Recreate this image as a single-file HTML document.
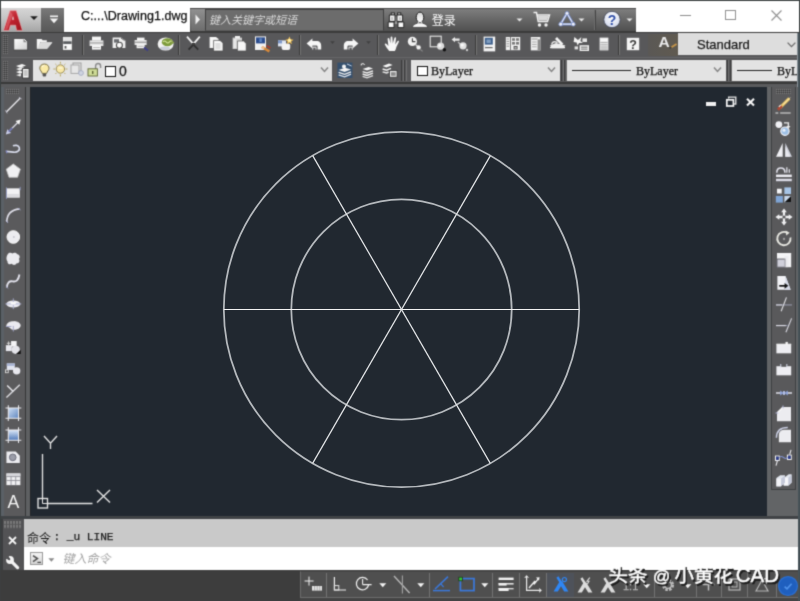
<!DOCTYPE html><html><head><meta charset="utf-8"><style>
*{margin:0;padding:0;box-sizing:border-box}
html,body{width:800px;height:601px;overflow:hidden;background:#555557;font-family:"Liberation Sans",sans-serif}
#r{position:absolute;left:0;top:0;width:800px;height:601px;overflow:hidden;background:#555557}
.a{position:absolute}
svg{position:absolute;overflow:visible}
#c{position:absolute;left:-4px;top:-4px;width:808px;height:609px;padding:0;filter:url(#sb);background:#3f4548}
#c>*{margin-left:4px;margin-top:4px}
</style></head><body><div id="r"><svg width="0" height="0" style="left:0;top:0"><filter id="sb" x="0" y="0" width="100%" height="100%" color-interpolation-filters="sRGB"><feConvolveMatrix order="3" kernelMatrix="0.02768 0.11101 0.02768 0.11101 0.44521 0.11101 0.02768 0.11101 0.02768" edgeMode="duplicate" preserveAlpha="true"/></filter></svg><div id="c"><div class="a" style="left:0px;top:0px;width:800px;height:1px;background:#3a4040;"></div>
<div class="a" style="left:0px;top:0px;width:1px;height:601px;background:#3a4040;"></div>
<div class="a" style="left:1px;top:1px;width:799px;height:31px;background:#ffffff;"></div>
<div class="a" style="left:1px;top:8px;width:40px;height:24px;background:linear-gradient(#d6d6d6,#c4c4c4 45%,#a4a4a4);"></div>
<div class="a" style="left:41px;top:8px;width:23px;height:24px;background:linear-gradient(#7a7a7a,#666 50%,#585858);"></div>
<svg style="left:3px;top:10px" width="20" height="21" viewBox="0 0 20 21" ><defs><linearGradient id="ag" x1="0" y1="0" x2="1" y2="1"><stop offset="0" stop-color="#e0606a"/><stop offset=".45" stop-color="#c02430"/><stop offset="1" stop-color="#9c141c"/></linearGradient></defs><path d="M7 0.6 L13.2 0.6 L19.4 20.4 L13.6 20.4 L12.6 15.2 L7.4 15.2 L6 20.4 L0.6 20.4 Z M9.2 9.6 L10.8 9.6 L10 6.6 Z" fill="url(#ag)" fill-rule="evenodd" stroke="#eeb0b4" stroke-opacity=".55" stroke-width="1"/><path d="M7.6 1.4 L2 19.6 L4.4 19.6 L9.6 5 Z" fill="#ec8088" opacity=".45"/></svg>
<svg style="left:30px;top:15.6px" width="8" height="4.4" viewBox="0 0 8 4.4" ><path d="M0.2 0.3 L7.8 0.3 L4 4.1 Z" fill="#1c1c1c"/></svg>
<svg style="left:49px;top:15px" width="10" height="9" viewBox="0 0 10 9" ><rect x="1" y="0.5" width="8" height="1.6" fill="#f4f4f4"/><path d="M0.8 3.6 L9.2 3.6 L5 8.3 Z" fill="#f4f4f4"/></svg>
<div class="a" style="left:81px;top:10px;font-size:12.5px;line-height:12.5px;color:#101010;font-family:'Liberation Sans',sans-serif;white-space:nowrap;-webkit-text-stroke:0.25px #101010;letter-spacing:0.05px">C:...\Drawing1.dwg</div>
<div class="a" style="left:190px;top:8px;width:446px;height:24px;background:linear-gradient(#7e7e7e,#666 50%,#505050);border-top:1px solid #484848;border-bottom:1.4px solid #3a3a3a"></div>
<div class="a" style="left:191px;top:9px;width:14px;height:22px;background:linear-gradient(#909090,#6c6c6c);"></div>
<svg style="left:195px;top:14px" width="6" height="11" viewBox="0 0 6 11" ><path d="M0.5 0.5 L5 5.5 L0.5 10.5 Z" fill="#f0f0f0"/></svg>
<div class="a" style="left:205px;top:9px;width:178.5px;height:21.5px;background:#6c6c6c;border:1px solid #404040;border-bottom-color:#5a5a5a"></div>
<svg style="left:0px;top:0px" width="800" height="40" viewBox="0 0 800 40" ><text x="209" y="23.5" font-family="'Liberation Sans','Noto Sans CJK SC',sans-serif" font-size="11" font-style="italic" fill="#d8d8d8">键入关键字或短语</text></svg>
<svg style="left:387px;top:12px" width="18" height="17" viewBox="0 0 18 17" ><g stroke="#1c1c1c" stroke-width=".9"><rect x="4.2" y="0.9" width="3.2" height="2.2" fill="#d8d8d8"/><rect x="10.6" y="0.9" width="3.2" height="2.2" fill="#d8d8d8"/><rect x="7.6" y="4.4" width="2.8" height="7.6" fill="#9a9a9a" stroke="none"/><path d="M2.4 3 H8 V9.4 H2.4Z" fill="#f4f4f4"/><path d="M10 3 H15.6 V9.4 H10Z" fill="#f4f4f4"/><path d="M1.2 10 H7 V15.6 H1.2Z" fill="#fafafa"/><path d="M11 10 H16.8 V15.6 H11Z" fill="#fafafa"/></g><rect x="4" y="5" width="2" height="3" fill="#c4c4c4"/><rect x="12" y="5" width="2" height="3" fill="#c4c4c4"/></svg>
<svg style="left:411px;top:11px" width="18" height="18" viewBox="0 0 18 18" ><defs><linearGradient id="ug" x1="0" y1="0" x2="0" y2="1"><stop offset="0" stop-color="#d8d8d8"/><stop offset="1" stop-color="#ffffff"/></linearGradient></defs><path d="M1.4 16.4 C1.6 13.6 4 13.2 6.6 12 L11.4 12 C14 13.2 16.4 13.6 16.6 16.4 Z" fill="#f8f8f8" stroke="#2a2a2a" stroke-width=".7"/><ellipse cx="9" cy="6.4" rx="3.8" ry="5.3" fill="url(#ug)" stroke="#1c1c1c" stroke-width="1"/><path d="M7 10.8 C8 12 10 12 11 10.8 L11.4 12.4 L6.6 12.4Z" fill="#e8e8e8"/></svg>
<svg style="left:0px;top:0px" width="800" height="40" viewBox="0 0 800 40" ><text x="431.8" y="24.6" font-family="'Liberation Sans','Noto Sans CJK SC',sans-serif" font-size="12" fill="#fafafa">登录</text></svg>
<svg style="left:516px;top:18px" width="7" height="4" viewBox="0 0 7 4" ><path d="M0.5 0.5 L6.5 0.5 L3.5 3.6 Z" fill="#e8e8e8"/></svg>
<svg style="left:533px;top:11px" width="18" height="18" viewBox="0 0 18 18" ><path d="M0.5 1.5 L3.5 1.5 L5.2 10.5 L14.5 10.5 L16.5 4 L4.4 4" fill="none" stroke="#f0f0f0" stroke-width="1.5"/><path d="M5 5 L15.5 5 L14 9.5 L5.6 9.5Z" fill="#d9d9d9"/><circle cx="6.5" cy="14" r="1.7" fill="#f0f0f0"/><circle cx="13" cy="14" r="1.7" fill="#f0f0f0"/></svg>
<svg style="left:558px;top:11px" width="18" height="17" viewBox="0 0 18 17" ><path d="M9 2.2 L15.4 13.2 L2.6 13.2 Z" fill="none" stroke="#6f86c8" stroke-width="2.6" stroke-linejoin="round"/><path d="M9 2.2 L15.4 13.2 L2.6 13.2 Z" fill="none" stroke="#e8ecf8" stroke-width="1.2" stroke-linejoin="round"/><circle cx="9" cy="2.4" r="1.9" fill="#f0f2fa" stroke="#6f86c8" stroke-width=".7"/><circle cx="15.3" cy="13.2" r="1.9" fill="#f0f2fa" stroke="#6f86c8" stroke-width=".7"/><circle cx="2.7" cy="13.2" r="1.9" fill="#f0f2fa" stroke="#6f86c8" stroke-width=".7"/></svg>
<svg style="left:578px;top:18px" width="7" height="4" viewBox="0 0 7 4" ><path d="M0.5 0.5 L6.5 0.5 L3.5 3.6 Z" fill="#e8e8e8"/></svg>
<div class="a" style="left:594px;top:10px;width:1px;height:20px;background:#6e6e6e;"></div>
<div class="a" style="left:595px;top:10px;width:1px;height:20px;background:#444;"></div>
<svg style="left:603px;top:10px" width="18" height="19" viewBox="0 0 18 19" ><defs><radialGradient id="hg" cx=".5" cy=".35" r=".7"><stop offset="0" stop-color="#ffffff"/><stop offset="1" stop-color="#cfd6ea"/></radialGradient></defs><circle cx="9" cy="9.5" r="8.2" fill="url(#hg)" stroke="#3a3f52" stroke-width=".8"/><text x="9" y="14.6" text-anchor="middle" font-family="Liberation Sans" font-weight="bold" font-size="14" fill="#2f4ea8">?</text></svg>
<svg style="left:626px;top:18px" width="7" height="4" viewBox="0 0 7 4" ><path d="M0.5 0.5 L6.5 0.5 L3.5 3.6 Z" fill="#e8e8e8"/></svg>
<div class="a" style="left:680px;top:15px;width:11px;height:1px;background:#8c8c8c;"></div>
<div class="a" style="left:725px;top:10px;width:11px;height:10px;background:transparent;border:1px solid #909090"></div>
<svg style="left:771px;top:10px" width="11" height="11" viewBox="0 0 11 11" ><path d="M0.5 0.5 L10.5 10.5 M10.5 0.5 L0.5 10.5" stroke="#909090" stroke-width="1.1" fill="none"/></svg>
<div class="a" style="left:1px;top:32px;width:799px;height:26px;background:#58585a;border-top:1px solid #3b3b3b;border-bottom:1.6px solid #3e3e3e"></div>
<div class="a" style="left:1px;top:57.4px;width:799px;height:25px;background:#58585a;border-top:1px solid #666668"></div>
<div class="a" style="left:1px;top:82.3px;width:799px;height:1.8px;background:#393939;"></div>
<div class="a" style="left:1px;top:84.1px;width:799px;height:3px;background:#5a5b5d;"></div>
<svg style="left:3px;top:35px" width="6" height="19" viewBox="0 0 6 19" ><defs><pattern id="gp3_35" width="2" height="2" patternUnits="userSpaceOnUse"><rect width="1" height="1" fill="#747474"/><rect x="1" y="1" width="1" height="1" fill="#3c3c3c"/></pattern></defs><rect width="5" height="19" fill="url(#gp3_35)"/></svg>
<svg width="0" height="0" style="left:0;top:0"><defs><linearGradient id="wg" x1="0" y1="0" x2="1" y2="1"><stop offset="0" stop-color="#ffffff"/><stop offset="1" stop-color="#cfcfcf"/></linearGradient></defs></svg>
<svg style="left:13px;top:38px" width="16" height="13" viewBox="0 0 16 13" ><path d="M0.8 0.5 H10.5 L14.6 4.2 V12 H0.8Z" fill="url(#wg)" stroke="#3a3a3a" stroke-width=".7"/><path d="M10.5 0.5 V4.2 H14.6Z" fill="#8a8a8a"/><path d="M11.2 1.3 L13.6 3.6" stroke="#fff" stroke-width="1"/></svg>
<svg style="left:36px;top:38px" width="17" height="12" viewBox="0 0 17 12" ><path d="M0.8 1 H5.5 L6.8 2.2 H10.8 V4 H4.6 L1.6 10.2 H0.8Z" fill="#f4f4f4"/><path d="M4.8 4.6 H16 L11.2 10.6 H1.2Z" fill="#dadada" stroke="#fafafa" stroke-width=".6"/></svg>
<svg style="left:62px;top:36px" width="11" height="15" viewBox="0 0 11 15" ><rect x="0.6" y="0.6" width="9.6" height="13.6" fill="#f0f0f0" stroke="#444" stroke-width=".6"/><rect x="1.2" y="5.3" width="8.4" height="2.6" fill="#55575a"/><rect x="1.8" y="1.4" width="7.2" height="3.4" fill="#e2e2e2"/><rect x="1.8" y="8.8" width="7.2" height="4.6" fill="#fafafa"/><rect x="2.6" y="10" width="1.8" height="2.6" fill="#555"/></svg>
<div class="a" style="left:82px;top:35px;width:1px;height:20px;background:#3a3a3a;"></div>
<div class="a" style="left:83px;top:35px;width:1px;height:20px;background:#747474;"></div>
<svg style="left:89px;top:36px" width="15" height="14" viewBox="0 0 15 14" ><rect x="3" y="0.6" width="9" height="4" fill="#f6f6f6"/><path d="M0.6 4.4 H14.4 V10 H0.6Z" fill="#e8e8e8"/><rect x="0.6" y="6.4" width="13.8" height="1.1" fill="#9a9a9a"/><rect x="3" y="9.4" width="9" height="4.2" fill="#fafafa"/><rect x="4" y="11" width="7" height=".8" fill="#aaa"/></svg>
<svg style="left:112px;top:37px" width="14" height="12" viewBox="0 0 14 12" ><path d="M0.6 0.6 H9 L13.4 3.6 V11 H0.6Z" fill="#efefef"/><rect x="2" y="2.2" width="5" height="3.4" fill="#6a6c70"/><circle cx="7.4" cy="8.2" r="3" fill="#fafafa" stroke="#4c4c4c" stroke-width="1.1"/><path d="M9 1 L12.6 3.6" stroke="#666" stroke-width="1"/></svg>
<svg style="left:134px;top:37px" width="15" height="14" viewBox="0 0 15 14" ><rect x="3" y="0.6" width="7.5" height="3" fill="#f6f6f6"/><path d="M0.6 3 H12.6 V8 H0.6Z" fill="#e8e8e8"/><rect x="0.6" y="4.7" width="12" height="1" fill="#8a8a8a"/><rect x="2.6" y="7.4" width="8" height="3.8" fill="#fafafa"/><rect x="3.6" y="8.8" width="6" height=".8" fill="#999"/><path d="M10 10.5 L14 13.5" stroke="#3c3c8a" stroke-width="1.6"/></svg>
<svg style="left:157px;top:36px" width="18" height="16" viewBox="0 0 18 16" ><ellipse cx="8.6" cy="8" rx="8" ry="6.6" fill="#f2f2f2"/><ellipse cx="10.4" cy="6.2" rx="5.6" ry="4" fill="#7d9a3c"/><path d="M6 6 q1.6 -2 3.2 0 t3.2 0 t3 0" stroke="#d8e8a0" stroke-width="1.1" fill="none"/><ellipse cx="8" cy="12.2" rx="5" ry="1.6" fill="#c8ccd8"/><path d="M14.5 4.5 L17.5 6.5 L14.5 8.5Z" fill="#8aa04a"/></svg>
<div class="a" style="left:178px;top:35px;width:1px;height:20px;background:#3a3a3a;"></div>
<div class="a" style="left:179px;top:35px;width:1px;height:20px;background:#747474;"></div>
<svg style="left:186px;top:36px" width="15" height="15" viewBox="0 0 15 15" ><path d="M1 0.6 L7.4 8 L13.8 0.6" stroke="#f4f4f4" stroke-width="1.8" fill="none"/><path d="M7.4 8.6 L2.6 13.6 M7.4 8.6 L12.2 13.6" stroke="#2e2e2e" stroke-width="1.8" fill="none"/><rect x="5.8" y="7" width="3.2" height="1.6" fill="#333"/></svg>
<svg style="left:208px;top:36px" width="17" height="16" viewBox="0 0 17 16" ><path d="M1.6 1 H8 L10.6 3 V12 H1.6Z" fill="#f6f6f6"/><path d="M5.6 4.4 H12 L15 7 V15 H5.6Z" fill="#f8f8f8" stroke="#4a4a4a" stroke-width=".7"/><path d="M7.4 8 H12.6 M7.4 10 H12.6 M7.4 12 H12.6" stroke="#b0b0b0" stroke-width=".7"/></svg>
<svg style="left:231px;top:35px" width="17" height="17" viewBox="0 0 17 17" ><path d="M1.6 2.6 H11 V14 H1.6Z" fill="#cfcfcf"/><rect x="4" y="1" width="5" height="2.6" fill="#f0f0f0"/><path d="M6.4 6 H12.6 L15.2 8.4 V16 H6.4Z" fill="#f6f6f6" stroke="#4a4a4a" stroke-width=".7"/><rect x="2.4" y="4" width="3" height="9" fill="#e8e8e8"/></svg>
<svg style="left:254px;top:35px" width="18" height="18" viewBox="0 0 18 18" ><rect x="1" y="1.4" width="11" height="13.6" fill="#f2f2f2"/><rect x="2" y="2.4" width="9" height="6" fill="#2c4d8e"/><rect x="5.4" y="3.4" width="2.4" height="3.6" fill="#5f86c4"/><path d="M8 12 L15.4 16.4" stroke="#d98a3a" stroke-width="2.6"/><path d="M12.6 10.6 L16.4 13" stroke="#b03a2a" stroke-width="1.6"/><circle cx="9" cy="12.6" r="1.6" fill="#f0c090"/></svg>
<svg style="left:277px;top:36px" width="18" height="16" viewBox="0 0 18 16" ><rect x="1" y="4.4" width="8" height="6" fill="#dfe6f2"/><rect x="4.6" y="7.6" width="8.6" height="6.4" rx="2" fill="#f4f4f4"/><rect x="1" y="4.4" width="4" height="3" fill="#7d97c8"/><path d="M12.4 0.4 L13.6 3.2 L16.6 3.8 L14.2 5.4 L14.8 8.2 L12.4 6.6 L10 8.2 L10.6 5.4 L8.4 3.8 L11.2 3.2Z" fill="#f2c25a"/><circle cx="12.4" cy="4.4" r="1.6" fill="#fff2b0"/></svg>
<div class="a" style="left:299px;top:35px;width:1px;height:20px;background:#3a3a3a;"></div>
<div class="a" style="left:300px;top:35px;width:1px;height:20px;background:#747474;"></div>
<svg style="left:306px;top:38px" width="16" height="13" viewBox="0 0 16 13" ><path d="M0.6 5.4 L6.4 0.4 V3 H10.4 C13.8 3 15.2 5 15.2 8 V11.6 H11.6 V9 C11.6 7.8 11 7.6 10 7.6 H6.4 V10.4Z" fill="#f6f6f6"/><path d="M6.8 11.6 V9.2 H10 V11.6" fill="none" stroke="#e0e0e0" stroke-width="1"/></svg>
<svg style="left:343px;top:38px" width="16" height="13" viewBox="0 0 16 13" ><g transform="translate(16,0) scale(-1,1)"><path d="M0.6 5.4 L6.4 0.4 V3 H10.4 C13.8 3 15.2 5 15.2 8 V11.6 H11.6 V9 C11.6 7.8 11 7.6 10 7.6 H6.4 V10.4Z" fill="#f6f6f6"/><path d="M6.8 11.6 V9.2 H10 V11.6" fill="none" stroke="#e0e0e0" stroke-width="1"/></g></svg>
<svg style="left:330px;top:41.2px" width="5" height="3.2" viewBox="0 0 5 3.2" ><path d="M0.2 0.2 H4.8 L2.5 3Z" fill="#404040"/></svg>
<svg style="left:366px;top:41.2px" width="5" height="3.2" viewBox="0 0 5 3.2" ><path d="M0.2 0.2 H4.8 L2.5 3Z" fill="#404040"/></svg>
<div class="a" style="left:377px;top:35px;width:1px;height:20px;background:#3a3a3a;"></div>
<div class="a" style="left:378px;top:35px;width:1px;height:20px;background:#747474;"></div>
<svg style="left:384px;top:36px" width="17" height="16" viewBox="0 0 17 16" ><path d="M5.2 15 C3.4 12.6 1.8 10.6 0.8 8.4 C0.6 7.4 1.8 7 2.6 8 L4.4 10 L3.6 3 C3.6 1.8 5.2 1.8 5.4 3 L6.4 7.6 L6.6 1.4 C6.8 0.2 8.4 0.2 8.4 1.4 L8.8 7.6 L10.4 2 C10.8 0.9 12.2 1.2 12 2.4 L11.2 8.4 L13.6 5 C14.4 4.2 15.4 5 14.8 6 L12.4 11 C12 13 11.4 14 10.8 15Z" fill="#f8f8f8"/></svg>
<svg style="left:407px;top:36px" width="17" height="16" viewBox="0 0 17 16" ><circle cx="5.4" cy="5.4" r="4.6" fill="#f2f2f2"/><path d="M5.4 2.2 V5.6 H8.4" stroke="#444" stroke-width="1.1" fill="none"/><path d="M8.8 8.8 L11 11" stroke="#c8c8c8" stroke-width="1.6"/><circle cx="11.6" cy="11.4" r="2.2" fill="#f4f4f4"/><path d="M13.4 13.4 L15.6 15.4" stroke="#8a8a8a" stroke-width="1.2"/></svg>
<svg style="left:429px;top:35px" width="18" height="17" viewBox="0 0 18 17" ><rect x="1.2" y="1.2" width="11" height="10.6" fill="none" stroke="#e6e6e6" stroke-width="1.1"/><circle cx="11.6" cy="11.2" r="3.6" fill="#dcdcdc"/><circle cx="10.8" cy="10.4" r="1.6" fill="#f8f8f8"/><circle cx="15.4" cy="14.8" r="1.7" fill="#101010"/></svg>
<svg style="left:451px;top:36px" width="18" height="16" viewBox="0 0 18 16" ><path d="M0.6 3.6 L4 1 V2.6 H8.6 V4.8 H4 V6.2Z" fill="#e8e8e8"/><path d="M7 6 L9.6 8.4" stroke="#bbb" stroke-width="1.4"/><circle cx="12" cy="9.8" r="3.6" fill="#e0e0e0"/><circle cx="11.2" cy="9" r="1.6" fill="#fafafa"/><circle cx="16" cy="14" r="1.2" fill="#c8c8c8"/></svg>
<div class="a" style="left:475px;top:35px;width:1px;height:20px;background:#3a3a3a;"></div>
<div class="a" style="left:476px;top:35px;width:1px;height:20px;background:#747474;"></div>
<svg style="left:483px;top:36px" width="13" height="16" viewBox="0 0 13 16" ><rect x="0.6" y="0.6" width="11.6" height="14.8" fill="#f4f4f4"/><rect x="1.8" y="1.8" width="8" height="6.8" fill="#3d5f8c"/><rect x="3.4" y="3.4" width="4.4" height="3.6" fill="#7f9dc0"/><path d="M3 11.6 H9.6" stroke="#666" stroke-width="1.2"/><path d="M3 10.4 L1.8 11.6 L3 12.8" fill="#666"/></svg>
<svg style="left:505px;top:36px" width="16" height="15" viewBox="0 0 16 15" ><rect x="0.8" y="1" width="14.4" height="13.2" fill="#f2f2f2"/><rect x="5" y="1" width=".9" height="13.2" fill="#6a6a6a"/><path d="M1.6 3 H4.2 M1.6 5.4 H4.2 M1.6 7.8 H4.2 M1.6 10.2 H4.2" stroke="#8a8a8a" stroke-width=".9"/><rect x="7" y="2.2" width="3" height="2.6" fill="#7a7a7a"/><rect x="11" y="2.2" width="3" height="2.6" fill="#7a7a7a"/><rect x="7" y="6" width="3" height="2.6" fill="#7a7a7a"/><rect x="11" y="6" width="3" height="2.6" fill="#7a7a7a"/><rect x="8.6" y="10" width="4" height="3.4" fill="#555"/><rect x="9.6" y="11" width="2" height="1.6" fill="#bbb"/></svg>
<svg style="left:530px;top:36px" width="11" height="15" viewBox="0 0 11 15" ><rect x="0.8" y="1" width="9.6" height="13.4" fill="#f0f0f0"/><rect x="7.6" y="3.4" width="2.8" height="11" fill="#8a8a8a"/><rect x="1.6" y="2" width="6" height="2" fill="#c0c0c0"/><path d="M2 6 H6.6 M2 8.4 H6.6 M2 10.8 H6.6" stroke="#aaa" stroke-width="1"/></svg>
<svg style="left:549px;top:36px" width="18" height="15" viewBox="0 0 18 15" ><path d="M1 9.6 L7 7 L16.4 9.4 L14.4 12.2 H2.6Z" fill="#eeeeee"/><path d="M1 11.6 H16" stroke="#f6f6f6" stroke-width="1.2"/><path d="M7 2 L13.4 8.6" stroke="#f4f4f4" stroke-width="2.8"/><path d="M2.6 8.6 C3.4 5.4 6.4 5 8.4 7" stroke="#e0e0e0" stroke-width="1.5" fill="none"/></svg>
<svg style="left:573px;top:36px" width="18" height="16" viewBox="0 0 18 16" ><path d="M1.4 1 L5 4 L8.4 1 L7.4 5 L10 7 H6 L4.6 9.6 L3.6 6.6 L0.6 6Z" fill="#f4f4f4"/><rect x="9.4" y="2.4" width="4.6" height="3.6" fill="#e6e6e6"/><rect x="6.6" y="9.2" width="9.4" height="5.8" fill="#f2f2f2"/><rect x="8" y="10.6" width="6.6" height="1.1" fill="#777"/><rect x="8" y="12.6" width="6.6" height="1.1" fill="#777"/><rect x="1.6" y="10.4" width="3.4" height="3" fill="#e0e0e0"/></svg>
<svg style="left:599px;top:37px" width="10" height="14" viewBox="0 0 10 14" ><rect x="0.6" y="0.6" width="8.8" height="12.8" fill="#ececec"/><rect x="1.6" y="1.8" width="6.8" height="2.2" fill="#fafafa"/><path d="M1.4 5.6 H8.6 M1.4 7.8 H8.6 M1.4 10 H8.6 M1.4 12 H8.6" stroke="#9a9a9a" stroke-width=".8"/></svg>
<div class="a" style="left:618px;top:35px;width:1px;height:20px;background:#3a3a3a;"></div>
<div class="a" style="left:619px;top:35px;width:1px;height:20px;background:#747474;"></div>
<svg style="left:626px;top:37px" width="14" height="14" viewBox="0 0 14 14" ><rect x="0.8" y="0.8" width="12.4" height="12.4" fill="#f4f4f4"/><text x="7" y="11.6" text-anchor="middle" font-family="Liberation Sans" font-weight="bold" font-size="12.5" fill="#3a3a3a">?</text></svg>
<div class="a" style="left:648px;top:34px;width:30px;height:22px;background:linear-gradient(90deg,#5a5855,#605a50);"></div>
<svg style="left:657px;top:35px" width="22" height="16" viewBox="0 0 22 16" ><text x="1.4" y="12.4" font-family="Liberation Sans" font-weight="bold" font-size="15.5" fill="#ececec">A</text><path d="M14 12.4 L19.6 9" stroke="#c8964a" stroke-width="1.8"/><path d="M12.6 13.4 L14.4 12.2" stroke="#3a3a3a" stroke-width="1.4"/></svg>
<div class="a" style="left:678px;top:33.2px;width:122px;height:22.2px;background:#dddddd;"></div>
<div class="a" style="left:697px;top:38px;font-size:13px;line-height:13px;color:#1a1a1a;font-family:'Liberation Sans',sans-serif;white-space:nowrap;-webkit-text-stroke:0.25px #1a1a1a;">Standard</div>
<svg style="left:786.5px;top:42.4px" width="9" height="6" viewBox="0 0 9 6" ><path d="M0.6 0.6 L4.5 4.6 L8.4 0.6" stroke="#6a6a6a" stroke-width="1.3" fill="none"/></svg>
<svg style="left:3px;top:61px" width="6" height="19" viewBox="0 0 6 19" ><defs><pattern id="gp3_61" width="2" height="2" patternUnits="userSpaceOnUse"><rect width="1" height="1" fill="#747474"/><rect x="1" y="1" width="1" height="1" fill="#3c3c3c"/></pattern></defs><rect width="5" height="19" fill="url(#gp3_61)"/></svg>
<div class="a" style="left:33px;top:59.5px;width:299px;height:21.4px;background:#e3e3e3;"></div>
<div class="a" style="left:411px;top:59.5px;width:149px;height:21.4px;background:#e3e3e3;"></div>
<div class="a" style="left:567px;top:59.5px;width:159px;height:21.4px;background:#e3e3e3;"></div>
<div class="a" style="left:732px;top:59.5px;width:68px;height:21.4px;background:#e3e3e3;"></div>
<svg style="left:319.5px;top:67.3px" width="9" height="6" viewBox="0 0 9 6" ><path d="M1 0.6 L4.5 4.4 L8 0.6" stroke="#848484" stroke-width="1.5" fill="none"/></svg>
<svg style="left:547px;top:67.3px" width="9" height="6" viewBox="0 0 9 6" ><path d="M1 0.6 L4.5 4.4 L8 0.6" stroke="#848484" stroke-width="1.5" fill="none"/></svg>
<svg style="left:713px;top:67.3px" width="9" height="6" viewBox="0 0 9 6" ><path d="M1 0.6 L4.5 4.4 L8 0.6" stroke="#848484" stroke-width="1.5" fill="none"/></svg>
<svg style="left:14px;top:63px" width="16" height="16" viewBox="0 0 16 16" ><path d="M2 3 L8 1 L12 2.6 L6 4.8Z" fill="#f6f6f6"/><path d="M2 6 L8 4 L10 4.8 L6 7.8Z" fill="#eaeaea"/><path d="M2 9 L6 7.8 L8 8.6 V10 L6 10.8Z" fill="#f6f6f6"/><path d="M2 12 L7 10.8 V13 L6 13.6Z" fill="#eaeaea"/><rect x="8.4" y="5.6" width="6.6" height="9.4" fill="#f8f8f8" stroke="#333" stroke-width=".8"/><path d="M9.8 8 H13.6 M9.8 10 H13.6 M9.8 12 H13.6" stroke="#888" stroke-width=".9"/></svg>
<svg style="left:39px;top:62.8px" width="11" height="15" viewBox="0 0 11 15" ><path d="M5.4 1 C8.6 1 10 3.4 10 5.2 C10 7.4 8 8.4 7.6 10.4 H3.2 C2.8 8.4 0.8 7.4 0.8 5.2 C0.8 3.4 2.2 1 5.4 1Z" fill="#faeaa6" stroke="#5a5028" stroke-width=".8"/><rect x="3.6" y="10.6" width="3.6" height="2.8" fill="#555" rx=".8"/><path d="M3.2 4 C3.6 2.8 4.6 2.4 5.4 2.4" stroke="#fff" stroke-width=".9" fill="none"/></svg>
<svg style="left:53px;top:61px" width="15" height="16" viewBox="0 0 15 16" ><circle cx="7.4" cy="8" r="4.2" fill="#f8e8a8" stroke="#8a7a40" stroke-width=".8"/><path d="M7.4 0.8 V2.6 M7.4 13.4 V15.4 M0.4 8 H2.2 M12.6 8 H14.4 M2.4 3 L3.6 4.2 M12.4 3 L11.2 4.2 M2.4 13 L3.6 11.8 M12.4 13 L11.2 11.8" stroke="#b8a860" stroke-width="1"/><path d="M5.4 7 H9.4" stroke="#fff" stroke-width=".8"/></svg>
<svg style="left:70px;top:62px" width="15" height="15" viewBox="0 0 15 15" ><rect x="3" y="1" width="8" height="8.4" fill="none" stroke="#9c9c9c" stroke-width="1"/><rect x="1" y="3" width="8" height="8.4" fill="#e6e6e6" stroke="#a8a8a8" stroke-width="1"/><circle cx="11" cy="11" r="2.4" fill="#d0d4e0" stroke="#a0a8c0" stroke-width=".8"/></svg>
<svg style="left:87px;top:62px" width="15" height="15" viewBox="0 0 15 15" ><path d="M8.6 7 V4 C8.6 0.6 13.6 0.6 13.6 4 V6" fill="none" stroke="#8a8a8a" stroke-width="1.4"/><rect x="1" y="6.8" width="9.4" height="7.2" fill="#cfdc98" stroke="#5c6434" stroke-width=".9"/><rect x="5" y="9" width="1.4" height="3" fill="#5c6434"/></svg>
<div class="a" style="left:104.6px;top:65.6px;width:11px;height:11px;background:#ffffff;border:1px solid #111"></div>
<div class="a" style="left:119px;top:64.4px;font-size:14px;line-height:14px;color:#111;font-family:'Liberation Sans',sans-serif;white-space:nowrap;-webkit-text-stroke:0.25px #111;">0</div>
<svg style="left:337px;top:62px" width="16" height="17" viewBox="0 0 16 17" ><rect x="0.4" y="0.6" width="15" height="15.4" fill="#35506e"/><circle cx="7" cy="4.4" r="2" fill="#f4f4f4"/><path d="M1.6 8 L8 5.8 L14 7.4 L7.6 10Z" fill="#f4f4f4"/><path d="M1.6 10.4 L7.6 12.4 L14 9.8" stroke="#f4f4f4" stroke-width="1.3" fill="none"/><path d="M1.6 12.8 L7.6 14.8 L14 12.2" stroke="#e0e6ee" stroke-width="1.3" fill="none"/><path d="M10 2 L14.6 4" stroke="#c8d4e4" stroke-width="1"/></svg>
<svg style="left:359px;top:62px" width="16" height="17" viewBox="0 0 16 17" ><path d="M2 2.6 C3.4 1 5 1.4 5.6 3" stroke="#eee" stroke-width="1" fill="none"/><path d="M2 1.4 L1.6 3.4 L3.4 3Z" fill="#eee"/><path d="M3.6 7 L9.6 5 L14 6.4 L8 8.6Z" fill="#f6f6f6"/><path d="M3.6 9.6 L8 11 L14 8.8" stroke="#f2f2f2" stroke-width="1.4" fill="none"/><path d="M3.6 12 L8 13.4 L14 11.2" stroke="#f2f2f2" stroke-width="1.4" fill="none"/><path d="M3.6 14.4 L8 15.8 L14 13.6" stroke="#e0e0e0" stroke-width="1.4" fill="none"/></svg>
<svg style="left:381px;top:62px" width="17" height="17" viewBox="0 0 17 17" ><path d="M1.6 4 L8 1.6 L11.6 3 L5.4 5.4Z" fill="#f6f6f6"/><path d="M1.6 7 L5.6 8.2 L10 6.4" stroke="#f2f2f2" stroke-width="1.4" fill="none"/><path d="M1.6 9.8 L5.6 11 L7.6 10" stroke="#e8e8e8" stroke-width="1.4" fill="none"/><rect x="8.6" y="8.6" width="7.4" height="6.6" fill="#e8e8e8" stroke="#333" stroke-width=".7"/><rect x="10" y="10.2" width="4.6" height="3.6" fill="#8a8a8a"/></svg>
<div class="a" style="left:401px;top:59.5px;width:1px;height:21.4px;background:#3c3c3c;"></div>
<div class="a" style="left:402.5px;top:59.5px;width:1.2px;height:21.4px;background:#707070;"></div>
<div class="a" style="left:404px;top:59.5px;width:1px;height:21.4px;background:#3c3c3c;"></div>
<div class="a" style="left:405.5px;top:59.5px;width:1.2px;height:21.4px;background:#707070;"></div>
<div class="a" style="left:561px;top:59.5px;width:1px;height:21.4px;background:#3c3c3c;"></div>
<div class="a" style="left:562.5px;top:59.5px;width:1.2px;height:21.4px;background:#707070;"></div>
<div class="a" style="left:564px;top:59.5px;width:1px;height:21.4px;background:#3c3c3c;"></div>
<div class="a" style="left:565.5px;top:59.5px;width:1.2px;height:21.4px;background:#707070;"></div>
<div class="a" style="left:726.5px;top:59.5px;width:1px;height:21.4px;background:#3c3c3c;"></div>
<div class="a" style="left:728.0px;top:59.5px;width:1.2px;height:21.4px;background:#707070;"></div>
<div class="a" style="left:729.5px;top:59.5px;width:1px;height:21.4px;background:#3c3c3c;"></div>
<div class="a" style="left:731.0px;top:59.5px;width:1.2px;height:21.4px;background:#707070;"></div>
<div class="a" style="left:417px;top:66px;width:11px;height:10px;background:#ffffff;border:1px solid #111"></div>
<div class="a" style="left:431px;top:64.5px;font-size:12px;line-height:12px;color:#111;font-family:'Liberation Serif',sans-serif;white-space:nowrap;-webkit-text-stroke:0.25px #111;">ByLayer</div>
<div class="a" style="left:572px;top:69.6px;width:59px;height:1.2px;background:#222;"></div>
<div class="a" style="left:636px;top:64.5px;font-size:12px;line-height:12px;color:#111;font-family:'Liberation Serif',sans-serif;white-space:nowrap;-webkit-text-stroke:0.25px #111;">ByLayer</div>
<div class="a" style="left:737px;top:69.6px;width:35px;height:1.2px;background:#222;"></div>
<div class="a" style="left:777px;top:64.5px;font-size:12px;line-height:12px;color:#111;font-family:'Liberation Serif',sans-serif;white-space:nowrap;-webkit-text-stroke:0.25px #111;">ByLa</div>
<div class="a" style="left:30px;top:87px;width:737px;height:429px;background:#212830;border-left:1px solid #232528"></div>
<div class="a" style="left:1px;top:87px;width:3px;height:430px;background:#5a6066;"></div>
<div class="a" style="left:4px;top:87px;width:21px;height:430px;background:#5a5a5c;"></div>
<div class="a" style="left:25px;top:87px;width:1px;height:430px;background:#353637;"></div>
<div class="a" style="left:26px;top:87px;width:4px;height:430px;background:#5e6062;"></div>
<svg style="left:6px;top:89px" width="14" height="6" viewBox="0 0 14 6" ><defs><pattern id="gph" width="2" height="2" patternUnits="userSpaceOnUse"><rect width="1" height="1" fill="#767676"/><rect x="1" y="1" width="1" height="1" fill="#404040"/></pattern></defs><rect width="13" height="5" fill="url(#gph)"/></svg>
<svg style="left:4px;top:95px" width="20" height="20" viewBox="0 0 20 20" ><g transform="translate(9.3 10) scale(.93) translate(-10 -10)"><path d="M2.5 17.5 L17.5 2.5" stroke="#e8e8ec" stroke-width="1.5"/><path d="M1.6 15.6 L3.4 19 M16 1.6 L19 3.6" stroke="#b8b8c8" stroke-width="1"/></g></svg>
<svg style="left:4px;top:117px" width="20" height="20" viewBox="0 0 20 20" ><g transform="translate(9.3 10) scale(.93) translate(-10 -10)"><path d="M3 17 L17 3" stroke="#d8d8e0" stroke-width="1.4"/><path d="M18 2 L12.4 3.6 L16.4 7.6Z" fill="#f4f4f4"/><path d="M2 18 L7.6 16.4 L3.6 12.4Z" fill="#c8cce8"/><path d="M5 15 L9 11" stroke="#6a70b0" stroke-width="1.6"/></g></svg>
<svg style="left:4px;top:139px" width="20" height="20" viewBox="0 0 20 20" ><g transform="translate(9.3 10) scale(.93) translate(-10 -10)"><path d="M2.6 12.6 L10 13.4 C15 14 17.4 11 16.4 8.4 C15.4 5.8 12 5.6 9.6 6.6" fill="none" stroke="#d8dcec" stroke-width="1.8"/><path d="M2 11.6 L3.4 14.4" stroke="#8088c0" stroke-width="1.4"/></g></svg>
<svg style="left:4px;top:161px" width="20" height="20" viewBox="0 0 20 20" ><g transform="translate(9.3 10) scale(.93) translate(-10 -10)"><path d="M10 2.4 L17.6 8 L14.6 16.8 H5.4 L2.4 8Z" fill="#f0f0f2" stroke="#c8c8c8" stroke-width=".8"/></g></svg>
<svg style="left:4px;top:183px" width="20" height="20" viewBox="0 0 20 20" ><g transform="translate(9.3 10) scale(.93) translate(-10 -10)"><rect x="2.6" y="5" width="14.4" height="10" fill="#f2f2f4"/><path d="M2.6 4 V16.4 M17.4 3.4 V7" stroke="#9098c0" stroke-width="1"/><rect x="3.6" y="11" width="12.4" height="3.4" fill="#dcdce0"/></g></svg>
<svg style="left:4px;top:205px" width="20" height="20" viewBox="0 0 20 20" ><g transform="translate(9.3 10) scale(.93) translate(-10 -10)"><path d="M3 17.6 C3 9 8 4.4 16.6 3.4" fill="none" stroke="#dcdce6" stroke-width="1.8"/><path d="M2 16 L4.4 18.6 M15 2.6 L17.8 4.6" stroke="#a8acd0" stroke-width="1"/></g></svg>
<svg style="left:4px;top:227px" width="20" height="20" viewBox="0 0 20 20" ><g transform="translate(9.3 10) scale(.93) translate(-10 -10)"><circle cx="10" cy="10" r="6.8" fill="#ececf0"/><circle cx="10" cy="10" r="6.8" fill="none" stroke="#fafafa" stroke-width="1"/><circle cx="10.6" cy="10" r="1" fill="#c4c4cc"/></g></svg>
<svg style="left:4px;top:249px" width="20" height="20" viewBox="0 0 20 20" ><g transform="translate(9.3 10) scale(.93) translate(-10 -10)"><path d="M4 5 C5 2.6 8 3 9 4 C10.6 2.6 13.6 3 14.4 5 C17 5.4 17.6 8.6 16 10 C17.6 12 16 15 13.6 14.6 C12.6 16.8 9.4 16.8 8.4 15.2 C6 16.6 3.4 15 3.8 12.6 C2 11 2.4 7.4 4 5Z" fill="#ececf0"/></g></svg>
<svg style="left:4px;top:271px" width="20" height="20" viewBox="0 0 20 20" ><g transform="translate(9.3 10) scale(.93) translate(-10 -10)"><path d="M3 17 C3.6 11.6 6 9.6 9.4 10.4 C13 11.2 15.6 9 16.6 3" fill="none" stroke="#e0e0ea" stroke-width="2"/><path d="M2 15.6 L4.6 18" stroke="#a0a4c8" stroke-width="1"/></g></svg>
<svg style="left:4px;top:292.5px" width="20" height="20" viewBox="0 0 20 20" ><g transform="translate(9.3 10) scale(.93) translate(-10 -10)"><ellipse cx="10" cy="11" rx="7.6" ry="3.8" fill="#eaeaf0"/><path d="M10 5 V16.6 M1.4 11 H18.6" stroke="#a8acd0" stroke-width=".9"/><ellipse cx="10" cy="10.4" rx="3" ry="1.6" fill="#fafafa"/></g></svg>
<svg style="left:4px;top:314.5px" width="20" height="20" viewBox="0 0 20 20" ><g transform="translate(9.3 10) scale(.93) translate(-10 -10)"><path d="M3 11.4 C3 7.4 7 6.4 10.4 6.4 C14.6 6.4 17.4 8 17.4 10.6 C17.4 13 14.6 14.6 11 14.6 C9 14.6 7.6 14.2 7 13.4" fill="#eaeaf0" stroke="#f4f4f8" stroke-width="1"/><path d="M2 11.6 H8 M10 11 V17" stroke="#a0a4c8" stroke-width="1"/></g></svg>
<svg style="left:4px;top:336.5px" width="20" height="20" viewBox="0 0 20 20" ><g transform="translate(9.3 10) scale(.93) translate(-10 -10)"><rect x="2" y="8" width="6.4" height="6.4" fill="#e8e8ee"/><rect x="7.6" y="3.6" width="6" height="6" fill="#f4f4f6"/><circle cx="12.6" cy="13" r="4.4" fill="#e4e4ea"/><path d="M5 4 V8 M3 6 H7" stroke="#dcdcdc" stroke-width="1"/><path d="M13 17.6 H18 V13Z" fill="#111"/></g></svg>
<svg style="left:4px;top:358.5px" width="20" height="20" viewBox="0 0 20 20" ><g transform="translate(9.3 10) scale(.93) translate(-10 -10)"><rect x="3" y="4" width="8.6" height="7" fill="#e0e4f0"/><rect x="3" y="4" width="8.6" height="2.6" fill="#a8b4d4"/><circle cx="13.6" cy="12" r="4" fill="#e8e8ee"/><rect x="1.6" y="11" width="3" height="3" fill="none" stroke="#e0e0e0" stroke-width=".9"/></g></svg>
<svg style="left:4px;top:380.5px" width="20" height="20" viewBox="0 0 20 20" ><g transform="translate(9.3 10) scale(.93) translate(-10 -10)"><path d="M2.6 17 L17 3.4" stroke="#dcdce0" stroke-width="1.5"/><path d="M3.4 4 L10 10.6" stroke="#e8e8ec" stroke-width="1.5"/></g></svg>
<svg style="left:4px;top:402.5px" width="20" height="20" viewBox="0 0 20 20" ><g transform="translate(9.3 10) scale(.93) translate(-10 -10)"><defs><linearGradient id="hg1" x1="0" y1="0" x2="1" y2="1"><stop offset="0" stop-color="#cfe0f4"/><stop offset="1" stop-color="#5f86c0"/></linearGradient></defs><rect x="4.6" y="4.6" width="11" height="11" fill="url(#hg1)"/><path d="M4.6 1.6 V18.6 M15.6 1.6 V18.6 M1.6 4.6 H18.6 M1.6 15.6 H18.6" stroke="#ececf0" stroke-width="1.1"/></g></svg>
<svg style="left:4px;top:424.5px" width="20" height="20" viewBox="0 0 20 20" ><g transform="translate(9.3 10) scale(.93) translate(-10 -10)"><defs><linearGradient id="hg2" x1="0" y1="0" x2="0" y2="1"><stop offset="0" stop-color="#dbe8f8"/><stop offset="1" stop-color="#4f78b8"/></linearGradient></defs><rect x="4.6" y="4.6" width="11" height="11" fill="url(#hg2)"/><path d="M4.6 1.6 V18.6 M15.6 1.6 V18.6 M1.6 4.6 H18.6 M1.6 15.6 H18.6" stroke="#ececf0" stroke-width="1.1"/></g></svg>
<svg style="left:4px;top:446.5px" width="20" height="20" viewBox="0 0 20 20" ><g transform="translate(9.3 10) scale(.93) translate(-10 -10)"><path d="M2.6 4 H12.6 L17 8.6 V16.4 H2.6Z" fill="#ececf0"/><circle cx="9.4" cy="10.4" r="3.6" fill="#9a9ca8" stroke="#6a6c78" stroke-width="1"/></g></svg>
<svg style="left:4px;top:468.5px" width="20" height="20" viewBox="0 0 20 20" ><g transform="translate(9.3 10) scale(.93) translate(-10 -10)"><rect x="2.6" y="4" width="15" height="12.6" fill="#f0f0f2"/><rect x="2.6" y="4" width="15" height="3" fill="#d8d8dc"/><path d="M2.6 7.4 H17.6 M2.6 11.6 H17.6 M7.6 7.4 V16.6 M12.6 7.4 V16.6" stroke="#8c8c94" stroke-width=".9"/></g></svg>
<svg style="left:4px;top:490.5px" width="20" height="20" viewBox="0 0 20 20" ><g transform="translate(9.3 10) scale(.93) translate(-10 -10)"><text x="10" y="17.6" text-anchor="middle" font-family="Liberation Sans" font-size="19" fill="#f4f4f4">A</text></g></svg>
<div class="a" style="left:767px;top:87px;width:33px;height:430px;background:#626466;"></div>
<div class="a" style="left:771px;top:87px;width:25px;height:403px;background:#59595b;border:1px solid #3e4042;border-top:none"></div>
<svg style="left:776px;top:89px" width="16" height="6" viewBox="0 0 16 6" ><rect width="15" height="5" fill="url(#gph)"/></svg>
<svg style="left:774px;top:95px" width="20" height="20" viewBox="0 0 20 20" ><g transform="translate(10 10) scale(.95) translate(-10 -10)"><path d="M15.6 3 L6 12.6" stroke="#e8c468" stroke-width="3.2"/><path d="M16.4 2.2 L9 9.6" stroke="#fff4c8" stroke-width="1"/><path d="M7.6 11 L3.6 15" stroke="#b04a34" stroke-width="3"/><path d="M6.6 10 L4.6 12" stroke="#f0e0d8" stroke-width="1.2"/><path d="M1 18.4 H4 M6 18.4 H17" stroke="#e8e8e8" stroke-width="1.2"/></g></svg>
<svg style="left:774px;top:117.5px" width="20" height="20" viewBox="0 0 20 20" ><g transform="translate(10 10) scale(.95) translate(-10 -10)"><circle cx="4.6" cy="6.4" r="3.6" fill="#f0f0f4"/><circle cx="11" cy="13.4" r="4.4" fill="#9ec0e6" stroke="#f4f4f8" stroke-width="1.2"/><circle cx="10" cy="12.4" r="1.6" fill="#e8f0fa"/><path d="M10 4.6 H14.6 V8.6" fill="none" stroke="#e8e8e8" stroke-width="1.5"/><path d="M12.4 8 L14.6 11 L16.8 8Z" fill="#e8e8e8"/></g></svg>
<svg style="left:774px;top:140px" width="20" height="20" viewBox="0 0 20 20" ><g transform="translate(10 10) scale(.95) translate(-10 -10)"><path d="M8.6 2.6 V17 H1.6Z" fill="#f0f0f4"/><path d="M11.4 2.6 V17 H18.4Z" fill="#cfd2dc"/><path d="M11.4 6 V17 H16.4Z" fill="#e8e8ee"/></g></svg>
<svg style="left:774px;top:163.5px" width="20" height="20" viewBox="0 0 20 20" ><g transform="translate(10 10) scale(.95) translate(-10 -10)"><path d="M2.4 8.6 C2.4 2 11 2 11 8.6" fill="none" stroke="#e0e0ea" stroke-width="1.6"/><path d="M13 3 V8.6 M15.6 5 V8.6" stroke="#d8d8e0" stroke-width="1.4"/><rect x="1.6" y="10.6" width="16.6" height="2.6" fill="#ececf2"/><rect x="1.6" y="15" width="16.6" height="2.6" fill="#dcdce6"/></g></svg>
<svg style="left:774px;top:185px" width="20" height="20" viewBox="0 0 20 20" ><g transform="translate(10 10) scale(.95) translate(-10 -10)"><rect x="2.6" y="3.4" width="5" height="5" fill="#f4f4f6"/><rect x="10.4" y="2" width="7" height="7" fill="#a6c4e6"/><rect x="1.4" y="11" width="7.4" height="7" fill="#7fa4d4"/><rect x="10.4" y="11" width="7" height="7" fill="#c8d8ec"/><path d="M10.4 18 H17.4 V11Z" fill="#111"/></g></svg>
<svg style="left:774px;top:206.5px" width="20" height="20" viewBox="0 0 20 20" ><g transform="translate(10 10) scale(.95) translate(-10 -10)"><path d="M10 1 L13 5 H11.2 V8.8 H15 V7 L19 10 L15 13 V11.2 H11.2 V15 H13 L10 19 L7 15 H8.8 V11.2 H5 V13 L1 10 L5 7 V8.8 H8.8 V5 H7Z" fill="#f0f0f2"/><circle cx="10" cy="10" r="1.7" fill="#5a5a5c"/></g></svg>
<svg style="left:774px;top:228.5px" width="20" height="20" viewBox="0 0 20 20" ><g transform="translate(10 10) scale(.95) translate(-10 -10)"><path d="M13.6 3.6 A7 7 0 1 0 16.8 8.4" fill="none" stroke="#e6e6e0" stroke-width="2"/><path d="M11.6 1 L16 3.4 L12.4 6.4Z" fill="#e6e6e0"/><circle cx="10" cy="10" r="1.2" fill="#a0a0a0"/></g></svg>
<svg style="left:774px;top:250px" width="20" height="20" viewBox="0 0 20 20" ><g transform="translate(10 10) scale(.95) translate(-10 -10)"><rect x="2.6" y="2.6" width="15" height="15" fill="#f4f4f6"/><rect x="2.6" y="9" width="8.6" height="8.6" fill="#d0d0da" stroke="#5c5c64" stroke-width="1"/><rect x="10.6" y="6" width="4" height="11.6" fill="#e4e4ea" opacity=".5"/></g></svg>
<svg style="left:774px;top:272.5px" width="20" height="20" viewBox="0 0 20 20" ><g transform="translate(10 10) scale(.95) translate(-10 -10)"><path d="M3 2.6 H11.6 L17 17 H3Z" fill="#f2f2f6"/><path d="M11.6 2.6 L17 17 H11Z" fill="#d4d8e6"/><path d="M5 13 H11.6" stroke="#111" stroke-width="1.8"/><path d="M10.6 10 L14.6 13 L10.6 16Z" fill="#111"/></g></svg>
<svg style="left:774px;top:293.5px" width="20" height="20" viewBox="0 0 20 20" ><g transform="translate(10 10) scale(.95) translate(-10 -10)"><path d="M1.6 11 H18.4" stroke="#a0a4b8" stroke-width="1"/><path d="M12.6 3 L7 17.6" stroke="#dcdce0" stroke-width="1.2"/><path d="M1.6 11 H8" stroke="#d0d0d8" stroke-width="1.2"/></g></svg>
<svg style="left:774px;top:315px" width="20" height="20" viewBox="0 0 20 20" ><g transform="translate(10 10) scale(.95) translate(-10 -10)"><path d="M1.6 10.6 H12" stroke="#d8d8e0" stroke-width="1.3"/><path d="M12 10.6 H15" stroke="#9aa0c0" stroke-width="1" stroke-dasharray="1.5 1"/><path d="M18 3 L12 17.6" stroke="#d4d4dc" stroke-width="1.2"/></g></svg>
<svg style="left:774px;top:337.5px" width="20" height="20" viewBox="0 0 20 20" ><g transform="translate(10 10) scale(.95) translate(-10 -10)"><rect x="2" y="6" width="15.6" height="9.6" fill="#eeeef2"/><rect x="11.6" y="3.6" width="2.4" height="3" fill="#f4f4f4"/><path d="M2 6 H17.6" stroke="#fafafa" stroke-width="1"/></g></svg>
<svg style="left:774px;top:360px" width="20" height="20" viewBox="0 0 20 20" ><g transform="translate(10 10) scale(.95) translate(-10 -10)"><rect x="2" y="6" width="15.6" height="9.6" fill="#eeeef2"/><rect x="7" y="4" width="5.6" height="2.6" fill="#5a5a5c"/><path d="M6.6 3.6 V7 M13 3.6 V7" stroke="#d0d4e4" stroke-width="1.1"/></g></svg>
<svg style="left:774px;top:382.5px" width="20" height="20" viewBox="0 0 20 20" ><g transform="translate(10 10) scale(.95) translate(-10 -10)"><path d="M1.6 10 H7.6 M12.4 10 H18.4" stroke="#e0e0ea" stroke-width="1.6"/><path d="M6 7.4 L9.6 10 L6 12.6Z M14 7.4 L10.4 10 L14 12.6Z" fill="#8fa4dc"/><rect x="9" y="8" width="2" height="4" fill="#b8c4ec"/></g></svg>
<svg style="left:774px;top:403.5px" width="20" height="20" viewBox="0 0 20 20" ><g transform="translate(10 10) scale(.95) translate(-10 -10)"><path d="M2.6 17.6 V9 L9 2.6 H17.4 V17.6Z" fill="#ececf0"/><path d="M2.6 9 L9 2.6" stroke="#fafafa" stroke-width="1.4"/><path d="M1 9 H4 M9 1 V4" stroke="#a8acd0" stroke-width="1"/></g></svg>
<svg style="left:774px;top:425px" width="20" height="20" viewBox="0 0 20 20" ><g transform="translate(10 10) scale(.95) translate(-10 -10)"><path d="M4.6 17.6 V10 C4.6 6 7.6 4.6 11 4.6 H17.4 V17.6Z" fill="#ececf0"/><path d="M2 13 C2 5.6 6 2 14 2" fill="none" stroke="#c8cce0" stroke-width="1.6"/></g></svg>
<svg style="left:774px;top:446.5px" width="20" height="20" viewBox="0 0 20 20" ><g transform="translate(10 10) scale(.95) translate(-10 -10)"><rect x="1" y="9" width="4" height="4.6" fill="none" stroke="#fff" stroke-width="1"/><rect x="13.6" y="8" width="4" height="4.6" fill="none" stroke="#fff" stroke-width="1"/><rect x="1.6" y="9.6" width="2.8" height="3.4" fill="#2c3c8c"/><rect x="14.2" y="8.6" width="2.8" height="3.4" fill="#2c3c8c"/><path d="M5 11 C8 6 11 15 13.6 10" fill="none" stroke="#8090d0" stroke-width="1.1"/><path d="M3 14 L1.6 19 M16 7.6 L17.4 2.6" stroke="#e8e8ec" stroke-width="1.2"/></g></svg>
<svg style="left:774px;top:468.5px" width="20" height="20" viewBox="0 0 20 20" ><g transform="translate(10 10) scale(.95) translate(-10 -10)"><path d="M2 9 L6 6 H11 V8 L15 5 H18 V14 L14.6 17 H9.6 V15 L6.6 18 H2Z" fill="#e0e4ec"/><rect x="2" y="9.6" width="5" height="8" fill="#f2f2f6"/><rect x="9.6" y="8.6" width="5" height="8" fill="#f6f6fa"/><path d="M7 9.6 L11 6.6 V14 L7 17.6Z" fill="#c4c8d8"/><path d="M14.6 8.6 L18 5.6 V13.6 L14.6 16.6Z" fill="#c4c8d8"/></g></svg>
<div class="a" style="left:706px;top:102px;width:10px;height:4px;background:#f2f2f2;"></div>
<svg style="left:725px;top:96px" width="12" height="12" viewBox="0 0 12 12" ><path d="M3.6 2.6 V1.2 H10.8 V8 H9.2" fill="none" stroke="#e8e8e8" stroke-width="1.3"/><rect x="1.8" y="3.8" width="6.6" height="6.2" fill="none" stroke="#f6f6f6" stroke-width="1.7"/></svg>
<svg style="left:746px;top:98px" width="9" height="9" viewBox="0 0 9 9" ><path d="M1 0.8 L8 7.6 M8 0.8 L1 7.6" stroke="#f6f6f6" stroke-width="2.1"/></svg>
<svg style="left:30px;top:430px" width="90" height="85" viewBox="0 0 90 85" ><g stroke="#e4e4e4" stroke-width="1.35" fill="none"><path d="M12.5 24 V68.5"/><path d="M17.5 73.5 H62.5"/><rect x="8" y="68.5" width="9.5" height="9.5"/><path d="M12.5 68.5 V73.5 H17.5" stroke-width="1"/><path d="M14 6 L20.5 13.2 L27 6 M20.5 13.2 V19"/><path d="M67 60 L80 72.5 M80 60 L67 72.5"/></g></svg>
<div class="a" style="left:1px;top:516px;width:799px;height:3px;background:#404346;"></div>
<div class="a" style="left:1px;top:519px;width:23px;height:51px;background:#535355;"></div>
<div class="a" style="left:1px;top:519px;width:2px;height:51px;background:#3c3e40;"></div>
<svg style="left:4px;top:520.5px" width="18" height="8" viewBox="0 0 18 8" ><defs><pattern id="gpc" width="3" height="3.8" patternUnits="userSpaceOnUse"><rect width="2" height="3" fill="#787878"/></pattern></defs><rect width="18" height="7.4" fill="url(#gpc)"/></svg>
<svg style="left:8px;top:536px" width="9" height="9" viewBox="0 0 9 9" ><path d="M1 1 L8 8 M8 1 L1 8" stroke="#f4f4f4" stroke-width="1.8"/></svg>
<svg style="left:5px;top:555px" width="15" height="15" viewBox="0 0 15 15" ><path d="M6.4 6.4 L12.6 12.6" stroke="#f4f4f4" stroke-width="3.2" stroke-linecap="round"/><circle cx="5" cy="5" r="3.9" fill="#f4f4f4"/><path d="M5.2 5.2 L0 3.4 L3.4 0Z" fill="#535355"/><circle cx="4.2" cy="4.2" r="1.1" fill="#535355"/></svg>
<div class="a" style="left:24px;top:519px;width:774px;height:28px;background:#c9c9c9;"></div>
<div class="a" style="left:24px;top:547px;width:774px;height:23px;background:#ffffff;"></div>
<div class="a" style="left:798px;top:519px;width:2px;height:52px;background:#5a5c5e;"></div>
<svg style="left:0px;top:0px" width="800" height="601" viewBox="0 0 800 601" ><text x="27" y="542.6" font-family="'Liberation Sans','Noto Sans CJK SC',sans-serif" font-size="12" fill="#141414">命令</text></svg>
<div class="a" style="left:53.4px;top:532.4px;font-size:11.15px;line-height:11.15px;color:#1c1c1c;font-family:'Liberation Mono',sans-serif;white-space:nowrap;-webkit-text-stroke:0.25px #1c1c1c;">: _u LINE</div>
<div class="a" style="left:30px;top:552px;width:13px;height:13px;background:linear-gradient(#f4f4f4,#d4d4d4);border:1px solid #9a9a9a"></div>
<svg style="left:31px;top:553px" width="12" height="12" viewBox="0 0 12 12" ><path d="M2 2.6 L6.4 5.6 L2 8.6" fill="none" stroke="#505050" stroke-width="1.6"/><path d="M6.4 9.4 H10" stroke="#505050" stroke-width="1.3"/></svg>
<svg style="left:48px;top:558px" width="7" height="4" viewBox="0 0 7 4" ><path d="M0.4 0.3 H6.4 L3.4 3.7Z" fill="#8a8a8a"/></svg>
<svg style="left:0px;top:0px" width="800" height="601" viewBox="0 0 800 601" ><text x="62.5" y="563" font-family="'Liberation Sans','Noto Sans CJK SC',sans-serif" font-size="12" font-style="italic" fill="#a4a4a4">键入命令</text></svg>
<div class="a" style="left:0px;top:570px;width:800px;height:31px;background:#3d3d3d;"></div>
<div class="a" style="left:300px;top:571px;width:500px;height:27px;background:#4f4f4f;border-left:1px solid #6c6c6c;border-top:1px solid #474747"></div>
<div class="a" style="left:300px;top:597px;width:500px;height:1px;background:#6c6c6c;"></div>
<div class="a" style="left:300px;top:598px;width:500px;height:3px;background:#444444;"></div>
<div class="a" style="left:326px;top:573px;width:1px;height:24px;background:#737373;"></div>
<div class="a" style="left:429px;top:573px;width:1px;height:24px;background:#737373;"></div>
<div class="a" style="left:492px;top:573px;width:1px;height:24px;background:#737373;"></div>
<div class="a" style="left:519px;top:573px;width:1px;height:24px;background:#737373;"></div>
<div class="a" style="left:546px;top:573px;width:1px;height:24px;background:#737373;"></div>
<div class="a" style="left:654px;top:573px;width:1px;height:24px;background:#737373;"></div>
<div class="a" style="left:696px;top:573px;width:1px;height:24px;background:#737373;"></div>
<div class="a" style="left:721px;top:573px;width:1px;height:24px;background:#737373;"></div>
<div class="a" style="left:747px;top:573px;width:1px;height:24px;background:#737373;"></div>
<div class="a" style="left:776px;top:573px;width:1px;height:24px;background:#737373;"></div>
<svg style="left:304px;top:576px" width="19" height="16" viewBox="0 0 19 16" ><path d="M5 0.6 V9.6 M0.6 5 H9.6" stroke="#f2f2f2" stroke-width="1"/><rect x="8" y="10" width="10" height="4.6" fill="#e4e4e4"/><path d="M10.6 10 V14.6 M13.2 10 V14.6 M15.8 10 V14.6" stroke="#888" stroke-width=".6"/></svg>
<svg style="left:332px;top:576px" width="15" height="16" viewBox="0 0 15 16" ><path d="M2.4 1 V14 H14" fill="none" stroke="#f0f0f0" stroke-width="1.2"/><rect x="2.4" y="9.6" width="4.4" height="4.4" fill="none" stroke="#e0e0e0" stroke-width="1"/></svg>
<svg style="left:355px;top:577px" width="18" height="16" viewBox="0 0 18 16" ><path d="M12.6 3 A6.2 6.2 0 1 0 13.6 8" fill="none" stroke="#f0f0f0" stroke-width="1.2"/><path d="M7.6 7.6 H16.6 M7.6 7.6 V2" stroke="#f0f0f0" stroke-width="1.1"/></svg>
<svg style="left:379px;top:583px" width="8" height="5" viewBox="0 0 8 5" ><path d="M0.3 0.3 H7.3 L3.8 4.3Z" fill="#f4f4f4"/></svg>
<svg style="left:393px;top:575px" width="18" height="19" viewBox="0 0 18 19" ><path d="M1 1 L16.6 18" stroke="#b8b8b8" stroke-width="1.3"/><path d="M9.4 0.6 V18.4" stroke="#a4a4a4" stroke-width="1.1"/></svg>
<svg style="left:417px;top:583px" width="8" height="5" viewBox="0 0 8 5" ><path d="M0.3 0.3 H7.3 L3.8 4.3Z" fill="#f4f4f4"/></svg>
<svg style="left:432px;top:575px" width="19" height="17" viewBox="0 0 19 17" ><path d="M1 15.6 H18" stroke="#3a78dc" stroke-width="1.5"/><path d="M3 14 L16 1.6" stroke="#3a78dc" stroke-width="1.5"/><path d="M8.6 8.6 L11.6 12" stroke="#3a78dc" stroke-width="1.2"/></svg>
<svg style="left:457px;top:576px" width="19" height="16" viewBox="0 0 19 16" ><rect x="3.4" y="2.6" width="13.6" height="12" fill="none" stroke="#3a78dc" stroke-width="1.7"/><rect x="1.4" y="0.8" width="4.4" height="4.4" fill="#1c3a1c"/><rect x="2.2" y="1.6" width="2.8" height="2.8" fill="#38c438"/></svg>
<svg style="left:481px;top:583px" width="8" height="5" viewBox="0 0 8 5" ><path d="M0.3 0.3 H7.3 L3.8 4.3Z" fill="#f4f4f4"/></svg>
<svg style="left:498px;top:577px" width="16" height="15" viewBox="0 0 16 15" ><rect x="0.6" y="0.6" width="15" height="2.4" fill="#f2f2f2"/><rect x="0.6" y="6" width="15" height="1.6" fill="#e0e0e0"/><rect x="0.6" y="6" width="8" height="2.6" fill="#f2f2f2"/><rect x="0.6" y="11" width="15" height="1.4" fill="#d8d8d8"/><rect x="0.6" y="11" width="10" height="3" fill="#f2f2f2"/></svg>
<svg style="left:524px;top:575px" width="18" height="18" viewBox="0 0 18 18" ><path d="M2.6 1 V15.4 H17" fill="none" stroke="#ececec" stroke-width="1.2"/><path d="M0.8 3 L2.6 0.6 L4.4 3 M15 13.6 L17.4 15.4 L15 17.2" fill="none" stroke="#ececec" stroke-width="1"/><path d="M5 13 L11 6 L10 9.4 L14.6 3.4" fill="none" stroke="#f2f2f2" stroke-width="1.3"/><path d="M12 2.6 L15.6 2.2 L15 5.8Z" fill="#f2f2f2"/></svg>
<div class="a" style="left:547px;top:573px;width:27px;height:24px;background:#4e525a;"></div>
<svg style="left:553px;top:576px" width="16" height="16" viewBox="0 0 16 16" ><path d="M6.6 5.6 L0.6 15.6 L4.8 15.6 L8 10.2 L11.2 15.6 L15.4 15.6 L9.4 5.6Z" fill="#2f86f4"/><path d="M4.4 1 L8.2 7" stroke="#2f86f4" stroke-width="2.4"/><circle cx="11.4" cy="3.6" r="2.1" fill="none" stroke="#2f86f4" stroke-width="1.2"/></svg>
<svg style="left:576.5px;top:576.5px" width="16" height="16" viewBox="0 0 16 16" ><path d="M6.6 5.6 L0.6 15.6 L4.8 15.6 L8 10.2 L11.2 15.6 L15.4 15.6 L9.4 5.6Z" fill="#dcdcdc"/><path d="M4.4 1 L8.2 7" stroke="#dcdcdc" stroke-width="2.4"/><path d="M12.8 0.6 L10 4.2 H12 L10.4 7" fill="none" stroke="#dcdcdc" stroke-width="1.1"/></svg>
<svg style="left:600px;top:576.5px" width="16" height="16" viewBox="0 0 16 16" ><path d="M6.6 5.6 L0.6 15.6 L4.8 15.6 L8 10.2 L11.2 15.6 L15.4 15.6 L9.4 5.6Z" fill="#dcdcdc"/><path d="M4.4 1 L8.2 7" stroke="#dcdcdc" stroke-width="2.4"/></svg>
<div class="a" style="left:623px;top:581px;font-size:11px;line-height:11px;color:#b4b4b4;font-family:'Liberation Sans',sans-serif;white-space:nowrap;-webkit-text-stroke:0.25px #b4b4b4;">1:1</div>
<svg style="left:643px;top:584px" width="8" height="5" viewBox="0 0 8 5" ><path d="M0.3 0.3 H7.3 L3.8 4.3Z" fill="#f4f4f4"/></svg>
<svg style="left:660px;top:577px" width="16" height="16" viewBox="0 0 16 16" ><circle cx="8" cy="8" r="4.6" fill="none" stroke="#bdbdbd" stroke-width="3" stroke-dasharray="2.4 1.2"/><circle cx="8" cy="8" r="3.4" fill="none" stroke="#bdbdbd" stroke-width="1.4"/></svg>
<svg style="left:684px;top:584px" width="8" height="5" viewBox="0 0 8 5" ><path d="M0.3 0.3 H7.3 L3.8 4.3Z" fill="#f4f4f4"/></svg>
<svg style="left:702px;top:578px" width="13" height="13" viewBox="0 0 13 13" ><path d="M6.5 0.6 V12.4 M0.6 6.5 H12.4" stroke="#bdbdbd" stroke-width="1.5"/></svg>
<svg style="left:728px;top:578px" width="13" height="13" viewBox="0 0 13 13" ><rect x="1" y="1" width="11" height="11" fill="none" stroke="#b8b8b8" stroke-width="1.2"/><rect x="4" y="4" width="5" height="5" fill="none" stroke="#b8b8b8" stroke-width="1"/></svg>
<svg style="left:754px;top:577px" width="16" height="16" viewBox="0 0 16 16" ><path d="M2 14 L8 3 L14 14Z" fill="none" stroke="#b8b8b8" stroke-width="1.2"/><circle cx="11" cy="4" r="2.4" fill="none" stroke="#b8b8b8" stroke-width="1.1"/></svg>
<svg style="left:778px;top:576px" width="20" height="20" viewBox="0 0 20 20" ><circle cx="10" cy="10" r="9.4" fill="#1f5fbe" stroke="#2a6ed0" stroke-width="1.4"/><path d="M6.6 10.6 L9 12.8 L13.6 7.8" fill="none" stroke="#4f92ea" stroke-width="1.6"/></svg>
<svg style="left:0px;top:0px" width="800" height="601" viewBox="0 0 800 601" ><text y="583.5" font-family="'Liberation Sans','Noto Sans CJK SC',sans-serif" font-size="19.5" fill="#1c1c1c" stroke="#1c1c1c" stroke-width="0.6" stroke-linejoin="round"><tspan x="610">头条</tspan><tspan x="654.5" font-size="17">@</tspan><tspan x="676">小黄花</tspan><tspan x="737.2" font-size="20.5">CAD</tspan></text></svg>
<svg style="left:0px;top:0px" width="800" height="601" viewBox="0 0 800 601" ><text y="582" font-family="'Liberation Sans','Noto Sans CJK SC',sans-serif" font-size="19.5" fill="#ffffff" stroke="#ffffff" stroke-width="0.5" stroke-linejoin="round"><tspan x="608.5">头条</tspan><tspan x="653" font-size="17">@</tspan><tspan x="674.5">小黄花</tspan><tspan x="735.7" font-size="20.5">CAD</tspan></text></svg>
<div class="a" style="left:799px;top:0px;width:1px;height:33px;background:#3a4040;"></div>
<div class="a" style="left:797px;top:33px;width:1.2px;height:54px;background:#8a9298;"></div>
<div class="a" style="left:798.2px;top:33px;width:1.8px;height:568px;background:#465258;"></div></div><svg style="left:0px;top:0px" width="800" height="601" viewBox="0 0 800 601" ><circle cx="401.5" cy="309.5" r="177.7" fill="none" stroke="#b6babe" stroke-width="1.75"/><circle cx="401.5" cy="309.5" r="110.2" fill="none" stroke="#b6babe" stroke-width="1.75"/><line x1="223.8" y1="309.5" x2="579.2" y2="309.5" stroke="#f2f2f2" stroke-width="1.15"/><line x1="312.6" y1="463.4" x2="490.4" y2="155.6" stroke="#e2e4e6" stroke-width="1.25"/><line x1="490.3" y1="463.4" x2="312.7" y2="155.6" stroke="#e2e4e6" stroke-width="1.25"/></svg></div></body></html>
